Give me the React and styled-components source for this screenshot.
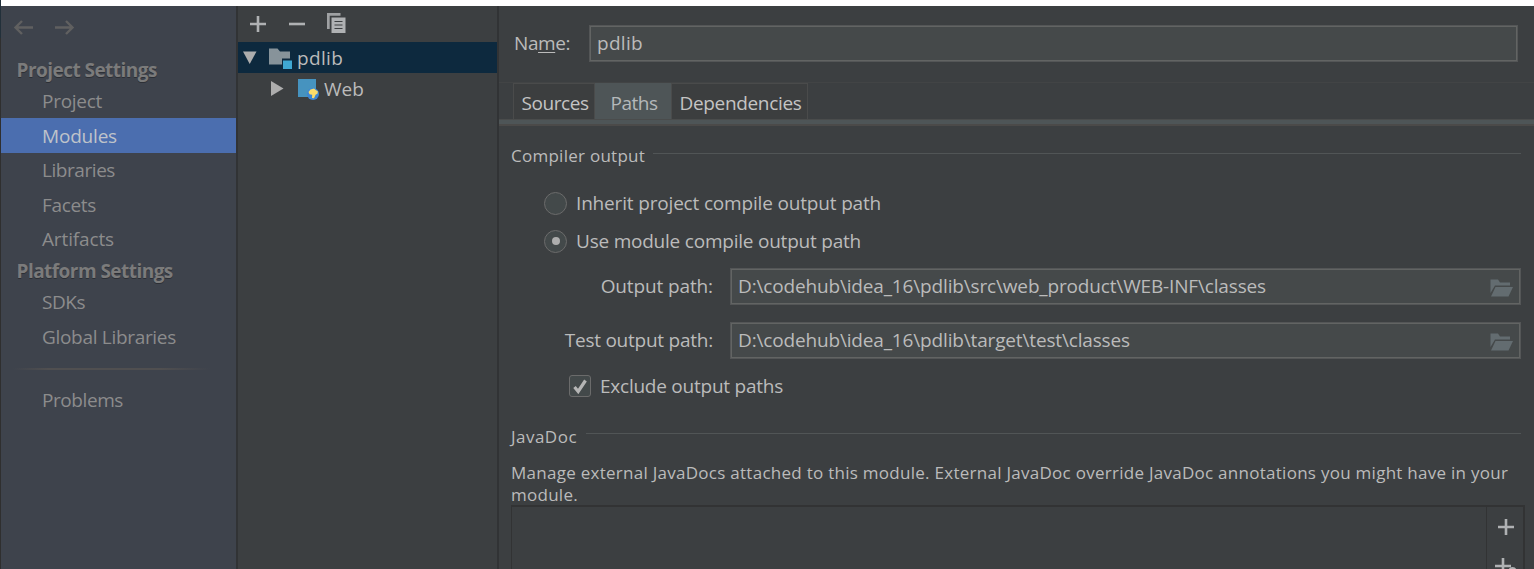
import React from 'react';
import styled, { createGlobalStyle } from 'styled-components';

const Global = createGlobalStyle`
  *, *::before, *::after { box-sizing: border-box; }
  body {
    margin: 0;
    overflow: hidden;
    background: #3c3f41;
    color: #bbbbbb;
    font-family: "Open Sans", "Noto Sans", sans-serif;
    font-size: 19px;
  }
  svg { display: block; flex: none; }
`;

const Screen = styled.div`
  display: flex;
  width: 1534px;
  height: 569px;
  overflow: hidden;
`;

const WindowEdge = styled.div`
  width: 1px;
  flex: none;
  background: linear-gradient(#22303a 0 38px, #2f2f2f 38px);
`;

const DialogWindow = styled.div`
  display: flex;
  flex: 1;
  min-width: 0;
  border-top: 6px solid #ffffff;
`;

const Label = styled.span`
  white-space: pre;
  letter-spacing: ${(p) => p.$track ?? -0.2}px;
`;

/* Sidebar */

const Sidebar = styled.nav`
  width: 235px;
  flex: none;
  background: #3e434c;
`;

const History = styled.div`
  display: flex;
  align-items: center;
  gap: 20px;
  height: 50px;
  padding: 0 0 8px 12px;
`;

const SectionTitle = styled.div`
  display: flex;
  align-items: center;
  height: ${(p) => p.$height}px;
  padding-left: 15.5px;
  color: #7b7b7b;
  font-weight: 700;
  text-shadow: 0 1px 0 #2c2f35;
`;

const SidebarItem = styled.div`
  display: flex;
  align-items: center;
  height: ${(p) => p.$height}px;
  padding-left: 41px;
  color: ${(p) => (p.$selected ? '#bfc3ca' : '#8c8c8c')};
  background: ${(p) => (p.$selected ? '#4b6eaf' : 'transparent')};
`;

const SidebarRule = styled.div`
  height: 2px;
  margin: 14px 26px 13px 12px;
  background: linear-gradient(90deg, transparent, #504f50 18%, #504f50 75%, transparent);
`;

/* Module tree */

const TreePanel = styled.section`
  width: 263px;
  flex: none;
  border: solid #313335;
  border-width: 0 2px;
`;

const TreeToolbar = styled.div`
  display: flex;
  align-items: center;
  height: 36px;
  padding-left: 12px;
`;

const ToolButton = styled.span`
  display: flex;
  width: ${(p) => p.$width ?? 39}px;
  padding-bottom: ${(p) => p.$lift ?? 0}px;
`;

const TreeRow = styled.div`
  display: flex;
  align-items: center;
  height: 31px;
  padding-left: ${(p) => p.$indent}px;
  background: ${(p) => (p.$selected ? '#0d293e' : 'transparent')};
`;

const TreeIcon = styled.span`
  display: flex;
  margin: 0 ${(p) => p.$after}px 0 ${(p) => p.$before}px;
`;

/* Editor */

const Editor = styled.main`
  flex: 1;
  min-width: 0;
  display: flex;
  flex-direction: column;
`;

const NameRow = styled.div`
  display: flex;
  align-items: center;
  padding: 19px 16px 20px 15px;
`;

const NameLabel = styled(Label)`
  width: 75px;
  padding-bottom: 2px;
  flex: none;
`;

const Mnemonic = styled.span`
  text-decoration: underline;
  text-decoration-thickness: 1px;
  text-underline-offset: 2px;
`;

const Field = styled.div`
  display: flex;
  align-items: center;
  justify-content: space-between;
  flex: 1;
  height: 37px;
  padding: 0 7px 2px;
  border: 1px solid #545657;
  background: #45494a;
  box-shadow: inset 0 0 0 1px #626463;
`;

const BrowseButton = styled.span`
  display: flex;
  padding-top: 4px;
`;

const TabStrip = styled.div`
  display: flex;
  height: 37px;
  padding-left: 14px;
  border-top: 1px solid #424445;
`;

const Tab = styled.div`
  display: flex;
  align-items: center;
  justify-content: center;
  width: ${(p) => p.$width}px;
  height: 36px;
  padding: 2px 0 0 2px;
  color: ${(p) => (p.$active ? '#b4b8ba' : '#c4c4c4')};
  background: ${(p) => (p.$active ? '#4e5557' : '#3c3e3f')};
  border: solid ${(p) => (p.$active ? '#4e5557' : '#4a4b4b')};
  border-width: 1px ${(p) => (p.$active ? 0 : 1)}px 0;
`;

const TabBand = styled.div`
  height: 7px;
  background: #4e5557;
  border-top: 1px solid #4a4c4c;
  border-bottom: 2px solid #4b4a49;
`;

const Group = styled.div`
  display: flex;
  align-items: center;
  height: 24px;
  gap: ${(p) => p.$gap}px;
  margin: ${(p) => p.$top}px 13px 0 12px;
  font-size: 17px;
`;

const GroupRule = styled.span`
  flex: 1;
  height: 1px;
  margin-bottom: ${(p) => p.$lift}px;
  background: #515556;
`;

const OptionList = styled.div`
  display: flex;
  flex-direction: column;
  padding: 17px 0 0 45px;
`;

const Option = styled.div`
  display: flex;
  align-items: center;
  gap: 9px;
  height: 38px;
`;

const Radio = styled.span`
  display: flex;
  align-items: center;
  justify-content: center;
  width: 23px;
  height: 23px;
  border: 1.5px solid #6b6b6b;
  border-radius: 50%;
  background: #43494a;

  &::after {
    content: '';
    width: 8px;
    height: 8px;
    border-radius: 50%;
    background: ${(p) => (p.$checked ? '#adadad' : 'transparent')};
  }
`;

const PathRow = styled.div`
  display: flex;
  align-items: center;
  height: 37px;
  margin: ${(p) => p.$top}px 13px 0 0;
`;

const PathLabel = styled(Label)`
  width: 214px;
  margin-right: 17px;
  padding-bottom: 2px;
  flex: none;
  text-align: right;
`;

const CheckRow = styled.div`
  display: flex;
  align-items: center;
  gap: 9px;
  height: 30px;
  margin-top: 12px;
  padding-left: 70px;
`;

const CheckBox = styled.span`
  display: flex;
  align-items: center;
  justify-content: center;
  width: 22px;
  height: 22px;
  border: 1.5px solid #6b6b6b;
  border-radius: 3px;
  background: #43494a;
`;

const Hint = styled.p`
  display: flex;
  flex-direction: column;
  height: 43px;
  margin: 14px 0 0 12px;
  font-size: 17px;
  line-height: 22px;
`;

const JavadocTable = styled.div`
  display: flex;
  flex: 1;
  min-height: 0;
  margin: 0 9px 0 12px;
  border: solid #323334;
  border-width: 2px 2px 0 1px;
`;

const TableBody = styled.div`
  flex: 1;
  border-right: 1px solid #323334;
`;

const TableActions = styled.div`
  display: flex;
  flex-direction: column;
  width: 36px;
  gap: 23px;
  padding: 12px 0 0 8px;
`;

const TableAction = styled.span`
  display: flex;
  padding-left: ${(p) => p.$indent ?? 0}px;
`;

const Arrow = ({ flip }) => (
  <svg width="21" height="15" viewBox="0 0 21 15" fill="none" stroke="#606060" strokeWidth="2.4">
    <path d={flip ? 'M1 7.5H19M12 1l6.5 6.5L12 14' : 'M20 7.5H2M9 1L2.5 7.5 9 14'} />
  </svg>
);

const Plus = () => (
  <svg width="16" height="16" viewBox="0 0 16 16" fill="none" stroke="#afb1b3" strokeWidth="2.6">
    <path d="M8 0v16M0 8h16" />
  </svg>
);

const Minus = () => (
  <svg width="16" height="16" viewBox="0 0 16 16" fill="none" stroke="#afb1b3" strokeWidth="2.6">
    <path d="M0 8h16" />
  </svg>
);

const Copy = () => (
  <svg width="19" height="20" viewBox="0 0 19 20">
    <path d="M0 0h13.500v2.700H2.700V16H0z" fill="#9fa1a3" />
    <path d="M4.500 4.500H18.500V20H4.500z" fill="#afb1b3" />
    <path d="M7.500 8.500h8M7.500 12h8M7.500 15.500h8" stroke="#3c3f41" strokeWidth="1.200" />
  </svg>
);

const Expander = ({ open }) => (
  <svg width="14" height="15" viewBox="0 0 14 15" fill="#adadad">
    <path d={open ? 'M0 1.500h13.500L6.700 14z' : 'M1 0l12.500 7.500L1 15z'} />
  </svg>
);

const ModuleFolder = () => (
  <svg width="24" height="22" viewBox="0 0 24 22">
    <path d="M0 1.500h8.500l2.500 3H21v7h-8v6H0z" fill="#87939a" />
    <path d="M14 13.500h9v8.500h-9z" fill="#3fa8d3" />
  </svg>
);

const WebFacet = () => (
  <svg width="22" height="22" viewBox="0 0 22 22">
    <path d="M0 1h18v18H0z" fill="#4693bf" />
    <circle cx="15" cy="16" r="6" fill="#3d86d4" />
    <path
      d="M10.500 14l2-2.600 3.500-.9 2 1.700 1.800 1-.2 2.200-2 1.300-1.600 3.600-2-.4.200-3.200-2.700-.4z"
      fill="#fbdc6a"
    />
  </svg>
);

const OpenFolder = () => (
  <svg width="23" height="18" viewBox="0 0 23 18" fill="#636c70">
    <path d="M0.500 0.500h7.500l2 3H20v3H5L0.500 14z" />
    <path d="M5.500 8H23l-4.500 9.500H1z" />
  </svg>
);

const CheckMark = () => (
  <svg width="14" height="15" viewBox="0 0 14 15" fill="none" stroke="#b5b5b5" strokeWidth="3.2">
    <path d="M1.500 8l3.700 4.500L12.500 1.500" />
  </svg>
);

const PlusSpecify = () => (
  <svg width="22" height="18" viewBox="0 0 22 18" fill="none" stroke="#afb1b3">
    <path d="M8 0v16M0 8h16" strokeWidth="2.600" />
    <circle cx="17.500" cy="13" r="3" strokeWidth="2" />
  </svg>
);

const projectItems = [
  { text: 'Project', height: 34, track: -0.28 },
  { text: 'Modules', height: 35, track: -0.19, selected: true },
  { text: 'Libraries', height: 34, track: -0.44 },
  { text: 'Facets', height: 35, track: -0.33 },
  { text: 'Artifacts', height: 34, track: -0.14 },
];

const platformItems = [
  { text: 'SDKs', height: 34, track: -0.47 },
  { text: 'Global Libraries', height: 35, track: -0.31 },
];

const paths = [
  {
    label: 'Output path:',
    value: 'D:\\codehub\\idea_16\\pdlib\\src\\web_product\\WEB-INF\\classes',
    top: 8,
    labelTrack: -0.12,
  },
  {
    label: 'Test output path:',
    value: 'D:\\codehub\\idea_16\\pdlib\\target\\test\\classes',
    top: 17,
    labelTrack: -0.24,
  },
];

const renderItem = (item) => (
  <SidebarItem key={item.text} $height={item.height} $selected={item.selected}>
    <Label $track={item.track}>{item.text}</Label>
  </SidebarItem>
);

export default function App() {
  return (
    <Screen>
      <Global />
      <WindowEdge />
      <DialogWindow>
        <Sidebar>
          <History>
            <Arrow />
            <Arrow flip />
          </History>
          <SectionTitle $height={28}>
            <Label $track={-0.54}>Project Settings</Label>
          </SectionTitle>
          {projectItems.map(renderItem)}
          <SectionTitle $height={29}>
            <Label $track={-0.54}>Platform Settings</Label>
          </SectionTitle>
          {platformItems.map(renderItem)}
          <SidebarRule />
          <SidebarItem $height={34}>
            <Label $track={-0.42}>Problems</Label>
          </SidebarItem>
        </Sidebar>

        <TreePanel>
          <TreeToolbar>
            <ToolButton><Plus /></ToolButton>
            <ToolButton $width={38}><Minus /></ToolButton>
            <ToolButton $lift={2}><Copy /></ToolButton>
          </TreeToolbar>
          <TreeRow $selected $indent={5}>
            <Expander open />
            <TreeIcon $before={12} $after={4}><ModuleFolder /></TreeIcon>
            <Label $track={0.35}>pdlib</Label>
          </TreeRow>
          <TreeRow $indent={32}>
            <Expander />
            <TreeIcon $before={14} $after={4}><WebFacet /></TreeIcon>
            <Label $track={0.05}>Web</Label>
          </TreeRow>
        </TreePanel>

        <Editor>
          <NameRow>
            <NameLabel $track={-0.42}>Na<Mnemonic>m</Mnemonic>e:</NameLabel>
            <Field><Label $track={0.3}>pdlib</Label></Field>
          </NameRow>
          <TabStrip>
            <Tab $width={82}><Label $track={-0.44}>Sources</Label></Tab>
            <Tab $width={76} $active><Label $track={-0.49}>Paths</Label></Tab>
            <Tab $width={137}><Label $track={-0.33}>Dependencies</Label></Tab>
          </TabStrip>
          <TabBand />

          <Group $top={17} $gap={8}>
            <Label $track={0.26}>Compiler output</Label>
            <GroupRule $lift={4} />
          </Group>
          <OptionList>
            <Option>
              <Radio />
              <Label $track={-0.17}>Inherit project compile output path</Label>
            </Option>
            <Option>
              <Radio $checked />
              <Label $track={-0.22}>Use module compile output path</Label>
            </Option>
          </OptionList>
          {paths.map((path) => (
            <PathRow key={path.label} $top={path.top}>
              <PathLabel $track={path.labelTrack}>{path.label}</PathLabel>
              <Field>
                <Label $track={-0.16}>{path.value}</Label>
                <BrowseButton><OpenFolder /></BrowseButton>
              </Field>
            </PathRow>
          ))}
          <CheckRow>
            <CheckBox><CheckMark /></CheckBox>
            <Label $track={-0.24}>Exclude output paths</Label>
          </CheckRow>

          <Group $top={23} $gap={9}>
            <Label $track={0.48}>JavaDoc</Label>
            <GroupRule $lift={6} />
          </Group>
          <Hint>
            <Label $track={0.27}>
              Manage external JavaDocs attached to this module. External JavaDoc override JavaDoc annotations you might have in your
            </Label>
            <Label $track={0.27}>module.</Label>
          </Hint>
          <JavadocTable>
            <TableBody />
            <TableActions>
              <TableAction $indent={3}><Plus /></TableAction>
              <TableAction><PlusSpecify /></TableAction>
            </TableActions>
          </JavadocTable>
        </Editor>
      </DialogWindow>
    </Screen>
  );
}
